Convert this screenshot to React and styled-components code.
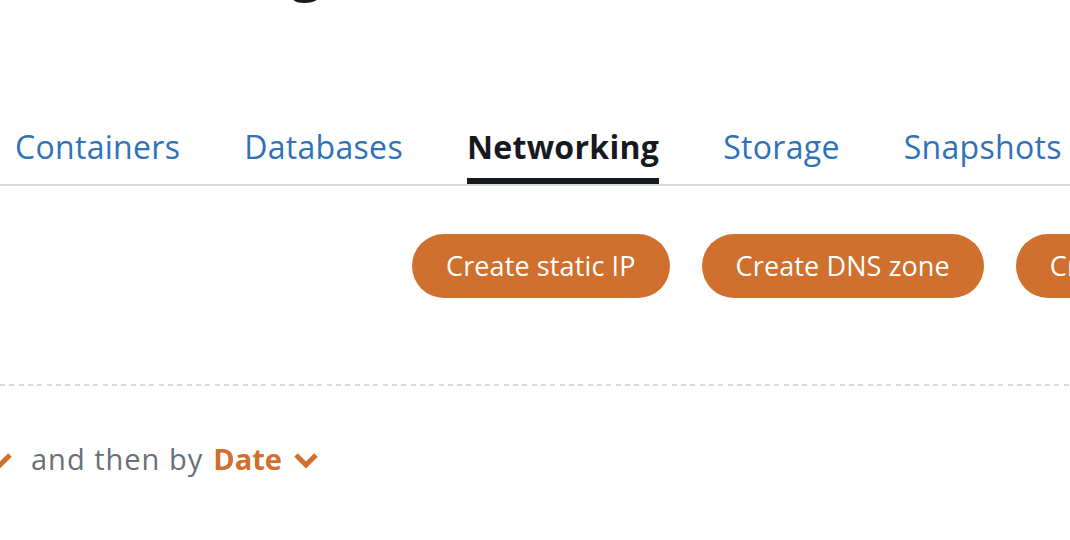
import React from "react";
import styled, { createGlobalStyle } from "styled-components";

const Global = createGlobalStyle`
  html, body { margin: 0; padding: 0; background: #ffffff; }
  body { width: 1070px; height: 540px; overflow: hidden; font-family: "Open Sans", "Noto Sans", sans-serif; }
`;

const Page = styled.div`
  width: 1070px;
  height: 540px;
  overflow: hidden;
`;

const HeadingArea = styled.div`
  height: 120px;
  overflow: hidden;
`;

const Heading = styled.h1`
  margin: -60px 0 0 -75px;
  font-size: 56px;
  line-height: 56px;
  font-weight: 700;
  color: #16191f;
  white-space: nowrap;
`;

const TabList = styled.nav`
  display: flex;
  gap: 64px;
  padding-left: 15px;
  border-bottom: 2px solid #d5dbdb;
  white-space: nowrap;
`;

const Tab = styled.a`
  display: block;
  padding: 5px 0 9px;
  font-size: 32px;
  line-height: 44px;
  letter-spacing: 0.3px;
  font-weight: ${(p) => (p.$active ? 700 : 400)};
  color: ${(p) => (p.$active ? "#16191f" : "#3071b8")};
  border-bottom: 6px solid ${(p) => (p.$active ? "#16191f" : "transparent")};
  text-decoration: none;
  cursor: pointer;
`;

const Toolbar = styled.div`
  display: flex;
  gap: 32px;
  margin-top: 48px;
  padding-left: 412px;
  white-space: nowrap;
`;

const Button = styled.button`
  flex: none;
  height: 64px;
  padding: 0 34px;
  border: none;
  border-radius: 32px;
  background: #cf702f;
  color: #ffffff;
  font-family: "Open Sans", "Noto Sans", sans-serif;
  font-size: 27px;
  font-weight: 400;
  letter-spacing: 0.12px;
  line-height: 64px;
  cursor: pointer;
`;

const Divider = styled.div`
  margin-top: 86px;
  height: 2px;
  background-image: repeating-linear-gradient(
    to right,
    #d5dbdb 0 5px,
    transparent 5px 9.33px
  );
`;

const SortRow = styled.div`
  display: flex;
  align-items: center;
  margin: 53px 0 0 -12px;
  font-size: 29px;
  line-height: 40px;
  color: #687078;
  white-space: nowrap;
`;

const SortLabel = styled.span`
  margin: 0 10px 0 19px;
  letter-spacing: 1px;
`;

const SortField = styled.span`
  font-weight: 700;
  color: #cf702f;
  margin-right: 12px;
`;

const ChevronBox = styled.span`
  display: inline-flex;
  width: 24px;
  height: 18px;
  margin-top: 1px;
`;

const Chevron = () => (
  <ChevronBox>
    <svg width="24" height="18" viewBox="0 0 24 18">
      <polyline
        points="2,4 12,14 22,4"
        fill="none"
        stroke="#cf702f"
        strokeWidth="5"
        strokeLinecap="butt"
        strokeLinejoin="miter"
      />
    </svg>
  </ChevronBox>
);

const tabs = ["Containers", "Databases", "Networking", "Storage", "Snapshots"];
const actions = ["Create static IP", "Create DNS zone", "Create load balancer"];

export default function App() {
  return (
    <Page>
      <Global />
      <HeadingArea>
        <Heading>Good morning!</Heading>
      </HeadingArea>
      <TabList>
        {tabs.map((t) => (
          <Tab key={t} $active={t === "Networking"}>
            {t}
          </Tab>
        ))}
      </TabList>
      <Toolbar>
        {actions.map((a) => (
          <Button key={a}>{a}</Button>
        ))}
      </Toolbar>
      <Divider />
      <SortRow>
        <Chevron />
        <SortLabel>and then by</SortLabel>
        <SortField>Date</SortField>
        <Chevron />
      </SortRow>
    </Page>
  );
}
